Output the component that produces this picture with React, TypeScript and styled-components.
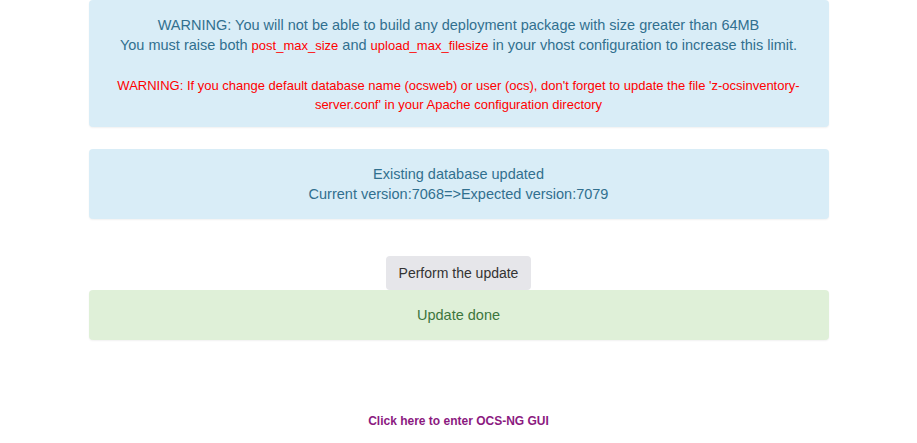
import React from 'react';
import { createGlobalStyle, styled } from 'styled-components';

const GlobalStyle = createGlobalStyle`
  html, body {
    margin: 0;
    padding: 0;
    background: #fff;
    font-family: 'Liberation Sans', Arial, sans-serif;
    font-size: 14.5px;
    line-height: 20px;
    color: #333;
  }
`;

const Page = styled.div`
  width: 740px;
  margin: 0 auto;
  display: flex;
  flex-direction: column;
  align-items: center;
`;

const Alert = styled.div<{ $tone: 'info' | 'success'; $tight?: boolean }>`
  align-self: stretch;
  padding: 15px;
  padding-bottom: ${({ $tight }) => ($tight ? '13px' : '15px')};
  border-radius: 4px;
  text-align: center;
  box-shadow: 0 1px 2px rgba(0, 0, 0, 0.06);
  background: ${({ $tone }) => ($tone === 'info' ? '#d9edf7' : '#dff0d8')};
  color: ${({ $tone }) => ($tone === 'info' ? '#31708f' : '#3c763d')};
`;

const Param = styled.span`
  color: #ff0000;
  font-size: 13px;
`;

const RedNote = styled.div`
  margin-top: 20px;
  color: #ff0000;
  font-size: 13px;
  line-height: 19px;
`;

const Spacer = styled.div<{ $h: number }>`
  height: ${({ $h }) => $h}px;
`;

const Button = styled.button`
  font-family: inherit;
  font-size: 14px;
  color: #333;
  background: #e6e6ea;
  border: 0;
  border-radius: 4px;
  padding: 7px 13px;
  line-height: 20px;
  cursor: pointer;
`;

const EnterLink = styled.a`
  margin-top: 71px;
  font-size: 12px;
  font-weight: bold;
  color: #8b1a7f;
  text-decoration: none;
`;

export default function App() {
  return (
    <>
      <GlobalStyle />
      <Page>
        <Alert $tone="info" $tight>
          WARNING: You will not be able to build any deployment package with size greater than 64MB
          <br />
          You must raise both <Param>post_max_size</Param> and <Param>upload_max_filesize</Param> in
          your vhost configuration to increase this limit.
          <RedNote>
            WARNING: If you change default database name (ocsweb) or user (ocs), don't forget to
            update the file 'z-ocsinventory-server.conf' in your Apache configuration directory
          </RedNote>
        </Alert>
        <Spacer $h={22} />
        <Alert $tone="info">
          Existing database updated
          <br />
          Current version:7068=&gt;Expected version:7079
        </Alert>
        <Spacer $h={37} />
        <Button>Perform the update</Button>
        <Alert $tone="success">Update done</Alert>
        <EnterLink href="#">Click here to enter OCS-NG GUI</EnterLink>
      </Page>
    </>
  );
}
